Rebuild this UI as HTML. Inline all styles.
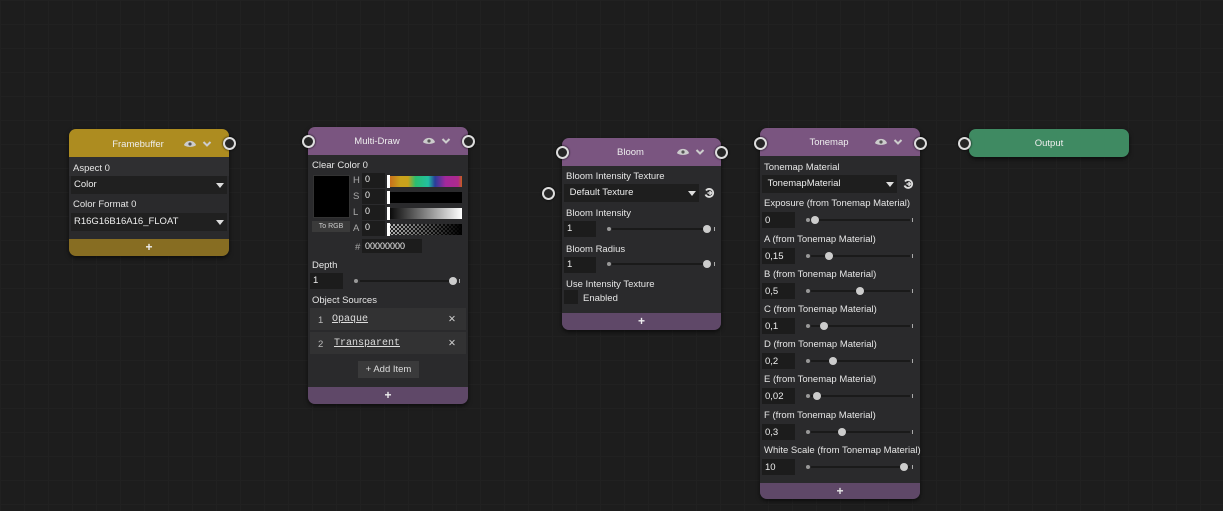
<!DOCTYPE html><html><head><style>
*{margin:0;padding:0;box-sizing:border-box}
body{width:1223px;height:511px;background:#1d1d1d;overflow:hidden;position:relative;font-family:"Liberation Sans",sans-serif;font-size:9.5px;color:#e6e6e6;
background-image:linear-gradient(#212121 1px,transparent 1px),linear-gradient(90deg,#212121 1px,transparent 1px);background-size:24px 24px}
.a{position:absolute}
.node{position:absolute;background:#2a2a2c;border-radius:7px;overflow:hidden;box-shadow:0 2px 4px rgba(0,0,0,.6)}
.hd{position:absolute;left:0;right:0;top:0;height:28px;text-align:center;line-height:30px;font-size:9.5px;color:#eee}
.ft{position:absolute;left:0;right:0;bottom:0;height:17px;text-align:center;line-height:17px;font-size:12px;font-weight:bold;color:#eee}
.port{position:absolute;width:13px;height:13px;border-radius:50%;border:2px solid #ddd;background:#262626;margin:-6.5px 0 0 -6.5px;box-shadow:0 0 2px #000}
.in{position:absolute;background:#1c1c1c;color:#eee;padding-left:3px;font-size:9.5px}
.lbl{position:absolute;font-size:9.5px;color:#e6e6e6;margin-top:1px;white-space:nowrap}
.sl{position:absolute;height:2px;background:#1a1a1a}
.dot{position:absolute;width:4px;height:4px;border-radius:50%;background:#999;margin:-2px 0 0 -2px}
.knob{position:absolute;width:8px;height:8px;border-radius:50%;background:#ccc;margin:-4px 0 0 -4px}
.tick{position:absolute;width:1px;height:4px;background:#aaa;margin-top:-2px}
.tri{position:absolute;width:0;height:0;border-left:4px solid transparent;border-right:4px solid transparent;border-top:5px solid #ddd}
</style></head><body>

<svg width="0" height="0" style="position:absolute"><defs>
<symbol id="eye" viewBox="0 0 14 10"><path d="M1 6 C3 0.5 11 0.5 13 6 C11 8.5 3 8.5 1 6Z" fill="#ccc"/><circle cx="7" cy="5" r="1.6" fill="#555"/></symbol>
<symbol id="chev" viewBox="0 0 10 8"><path d="M1.5 2 L5 5.5 L8.5 2" stroke="#ccc" stroke-width="2" fill="none"/></symbol>
<symbol id="rst" viewBox="0 0 12 12"><path d="M3 3.5 A4 4 0 1 1 2.5 7.5" stroke="#ddd" stroke-width="1.8" fill="none"/><path d="M4.5 6 L8 6" stroke="#ddd" stroke-width="1.6"/><path d="M6.5 4 L8.5 6 L6.5 8" stroke="#ddd" stroke-width="1.4" fill="none"/></symbol>
</defs></svg>

<!-- Framebuffer -->
<div class="node" style="left:69px;top:129px;width:160px;height:127px">
<div class="hd" style="background:#ad8c20;padding-right:40px;padding-left:18px;line-height:32px">Framebuffer</div>
<svg class="a" style="left:114px;top:10px" width="14" height="10"><use href="#eye"/></svg>
<svg class="a" style="left:133px;top:11px" width="10" height="8"><use href="#chev"/></svg>
<div class="a" style="left:0;right:0;top:28px;height:19px;background:#2f2f31"></div>
<div class="lbl" style="left:4px;top:33px">Aspect 0</div>
<div class="in" style="left:2px;top:47px;width:156px;height:18px;line-height:18px;background:#202020">Color</div>
<div class="tri" style="left:147px;top:54px"></div>
<div class="lbl" style="left:4px;top:69px">Color Format 0</div>
<div class="in" style="left:2px;top:84px;width:156px;height:18px;line-height:18px;background:#202020">R16G16B16A16_FLOAT</div>
<div class="tri" style="left:147px;top:91px"></div>
<div class="ft" style="background:#876d22">+</div>
</div>
<div class="port" style="left:229px;top:143px"></div>

<!-- Multi-Draw -->
<div class="node" style="left:308px;top:127px;width:160px;height:277px">
<div class="hd" style="background:#7a5580;padding-right:40px;padding-left:18px">Multi-Draw</div>
<svg class="a" style="left:114px;top:9px" width="14" height="10"><use href="#eye"/></svg>
<svg class="a" style="left:133px;top:10px" width="10" height="8"><use href="#chev"/></svg>
<div class="lbl" style="left:4px;top:32px">Clear Color 0</div>
<div class="a" style="left:5px;top:48px;width:37px;height:43px;background:#000;border:1px solid #333"></div>
<div class="a" style="left:4px;top:94px;width:38px;height:11px;background:#3a3a3a;font-size:7px;line-height:11px;text-align:center;color:#ccc">To RGB</div>
<div class="lbl" style="left:45px;top:47px;color:#aaa">H</div>
<div class="lbl" style="left:45px;top:63px;color:#aaa">S</div>
<div class="lbl" style="left:45px;top:79px;color:#aaa">L</div>
<div class="lbl" style="left:45px;top:95px;color:#aaa">A</div>
<div class="in" style="left:54px;top:46px;width:23px;height:15px;line-height:13px;font-size:9px">0</div>
<div class="in" style="left:54px;top:62px;width:23px;height:15px;line-height:13px;font-size:9px">0</div>
<div class="in" style="left:54px;top:78px;width:23px;height:15px;line-height:13px;font-size:9px">0</div>
<div class="in" style="left:54px;top:94px;width:23px;height:15px;line-height:13px;font-size:9px">0</div>
<div class="a" style="left:79px;top:49px;width:75px;height:11px;background:linear-gradient(90deg,#c7611a,#c9a21c 18%,#c9a21c 28%,#2bbd6f 38%,#22c0a0 55%,#283d9a 64%,#a3289c 78%,#ad2a8c 95%,#c7611a)"></div>
<div class="a" style="left:79px;top:65px;width:75px;height:11px;background:#000"></div>
<div class="a" style="left:79px;top:81px;width:75px;height:11px;background:linear-gradient(90deg,#000,#fff)"></div>
<div class="a" style="left:79px;top:97px;width:75px;height:11px;background:repeating-conic-gradient(#bbb 0 25%,#222 0 50%) 0 0/4px 4px;"></div>
<div class="a" style="left:79px;top:97px;width:75px;height:11px;background:linear-gradient(90deg,rgba(0,0,0,0),#000)"></div>
<div class="a" style="left:79px;top:48px;width:3px;height:13px;background:#fff"></div>
<div class="a" style="left:79px;top:64px;width:3px;height:13px;background:#fff"></div>
<div class="a" style="left:79px;top:80px;width:3px;height:13px;background:#fff"></div>
<div class="a" style="left:79px;top:96px;width:3px;height:13px;background:#fff"></div>
<div class="lbl" style="left:47px;top:114px;color:#aaa">#</div>
<div class="in" style="left:54px;top:112px;width:60px;height:14px;line-height:14px;font-size:9px">00000000</div>
<div class="lbl" style="left:4px;top:132px">Depth</div>
<div class="in" style="left:2px;top:146px;width:33px;height:16px;line-height:16px">1</div>
<div class="dot" style="left:48px;top:154px"></div>
<div class="sl" style="left:52px;top:153px;width:94px"></div>
<div class="knob" style="left:145px;top:154px"></div>
<div class="tick" style="left:151px;top:154px"></div>
<div class="lbl" style="left:4px;top:167px">Object Sources</div>
<div class="a" style="left:2px;top:181px;width:156px;height:22px;background:#323233"></div>
<div class="a" style="left:2px;top:205px;width:156px;height:22px;background:#323233"></div>
<div class="lbl" style="left:10px;top:187px;color:#bbb">1</div>
<div class="lbl" style="left:24px;top:186px;font-family:'Liberation Mono',monospace;font-size:10px;text-decoration:underline;color:#ddd">Opaque</div>
<div class="lbl" style="left:140px;top:186px;color:#ccc">✕</div>
<div class="lbl" style="left:10px;top:211px;color:#bbb">2</div>
<div class="lbl" style="left:26px;top:210px;font-family:'Liberation Mono',monospace;font-size:10px;text-decoration:underline;color:#ddd">Transparent</div>
<div class="lbl" style="left:140px;top:210px;color:#ccc">✕</div>
<div class="a" style="left:50px;top:234px;width:61px;height:17px;background:#3a3a3b;text-align:center;line-height:17px;color:#ddd">+ Add Item</div>
<div class="ft" style="background:#5f4868">+</div>
</div>
<div class="port" style="left:308px;top:141px"></div>
<div class="port" style="left:468px;top:141px"></div>

<!-- Bloom -->
<div class="node" style="left:562px;top:138px;width:159px;height:192px">
<div class="hd" style="background:#7a5580;padding-right:40px;padding-left:18px">Bloom</div>
<svg class="a" style="left:114px;top:9px" width="14" height="10"><use href="#eye"/></svg>
<svg class="a" style="left:133px;top:10px" width="10" height="8"><use href="#chev"/></svg>
<div class="lbl" style="left:4px;top:32px">Bloom Intensity Texture</div>
<div class="in" style="left:2px;top:46px;width:135px;height:18px;line-height:18px;background:#1e1e1e">&nbsp;Default Texture</div>
<div class="tri" style="left:126px;top:53px"></div>
<svg class="a" style="left:141px;top:49px" width="12" height="12"><use href="#rst"/></svg>
<div class="lbl" style="left:4px;top:69px">Bloom Intensity</div>
<div class="in" style="left:2px;top:83px;width:32px;height:16px;line-height:16px">1</div>
<div class="dot" style="left:47px;top:91px"></div><div class="sl" style="left:50px;top:90px;width:95px"></div>
<div class="knob" style="left:145px;top:91px"></div><div class="tick" style="left:152px;top:91px"></div>
<div class="lbl" style="left:4px;top:105px">Bloom Radius</div>
<div class="in" style="left:2px;top:119px;width:32px;height:16px;line-height:16px">1</div>
<div class="dot" style="left:47px;top:126px"></div><div class="sl" style="left:50px;top:125px;width:95px"></div>
<div class="knob" style="left:145px;top:126px"></div><div class="tick" style="left:152px;top:126px"></div>
<div class="lbl" style="left:4px;top:140px">Use Intensity Texture</div>
<div class="a" style="left:2px;top:152px;width:14px;height:14px;background:#1c1c1c"></div>
<div class="lbl" style="left:21px;top:154px">Enabled</div>
<div class="ft" style="background:#5f4868">+</div>
</div>
<div class="port" style="left:562px;top:152px"></div>
<div class="port" style="left:721px;top:152px"></div>
<div class="port" style="left:548px;top:193px"></div>

<!-- Tonemap -->
<div class="node" style="left:760px;top:128px;width:160px;height:371px">
<div class="hd" style="background:#7a5580;padding-right:40px;padding-left:18px">Tonemap</div>
<svg class="a" style="left:114px;top:9px" width="14" height="10"><use href="#eye"/></svg>
<svg class="a" style="left:133px;top:10px" width="10" height="8"><use href="#chev"/></svg>
<div class="lbl" style="left:4px;top:33px">Tonemap Material</div>
<div class="in" style="left:2px;top:47px;width:135px;height:18px;line-height:18px;background:#1e1e1e">&nbsp;TonemapMaterial</div>
<div class="tri" style="left:126px;top:54px"></div>
<svg class="a" style="left:142px;top:50px" width="12" height="12"><use href="#rst"/></svg>
</div>
<div class="port" style="left:760px;top:143px"></div>
<div class="port" style="left:920px;top:143px"></div>
<div id="tm"></div>
<div class="a" style="left:760px;top:483px;width:160px;height:16px;background:#5f4868;border-radius:0 0 7px 7px;text-align:center;line-height:16px;font-weight:bold;font-size:12px">+</div>

<!-- Output -->
<div class="node" style="left:969px;top:129px;width:160px;height:28px;background:#3f8a62">
<div class="hd">Output</div></div>
<div class="port" style="left:964px;top:143px"></div>

<script>
var d=[["Exposure (from Tonemap Material)","0",815],["A (from Tonemap Material)","0,15",829],["B (from Tonemap Material)","0,5",860],["C (from Tonemap Material)","0,1",824],["D (from Tonemap Material)","0,2",833],["E (from Tonemap Material)","0,02",817],["F (from Tonemap Material)","0,3",842],["White Scale (from Tonemap Material)","10",904]];
var ys=[203,239,274,309,344,379,415,450],h="";
d.forEach(function(r,i){var y=ys[i];
h+='<div class="lbl" style="left:764px;top:'+(y-6)+'px">'+r[0]+'</div>';
h+='<div class="in" style="left:762px;top:'+(y+9)+'px;width:33px;height:16px;line-height:17px">'+r[1]+'</div>';
h+='<div class="dot" style="left:808px;top:'+(y+17)+'px"></div><div class="sl" style="left:811px;top:'+(y+16)+'px;width:99px"></div>';
h+='<div class="knob" style="left:'+r[2]+'px;top:'+(y+17)+'px"></div><div class="tick" style="left:912px;top:'+(y+17)+'px"></div>';});
document.getElementById("tm").innerHTML=h;
</script>
</body></html>
